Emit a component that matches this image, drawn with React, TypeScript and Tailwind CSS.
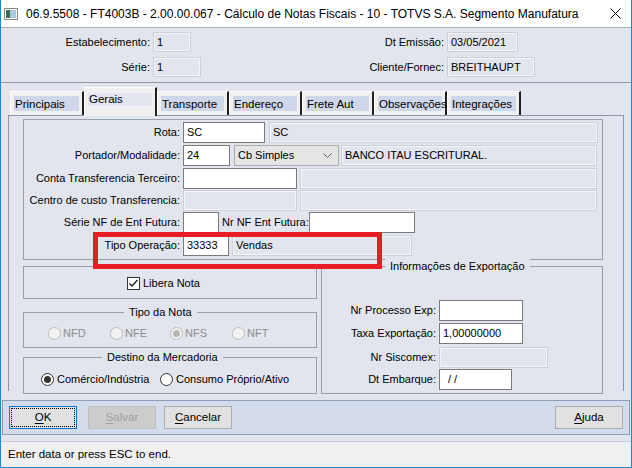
import React from "react";

const FONT = "font-['Liberation_Sans',Arial,sans-serif]";

function White({ w, value = "", className = "" }: { w: number; value?: string; className?: string }) {
  return (
    <div
      className={`h-[21px] bg-white border border-[#7a7a7a] px-[3px] flex items-center whitespace-nowrap overflow-hidden ${className}`}
      style={{ width: w }}
    >
      {value}
    </div>
  );
}

function Disabled({ w, value = "", className = "" }: { w: number; value?: string; className?: string }) {
  return (
    <div
      className={`h-[21px] bg-[#e2e5ed] border border-[#cdd0d6] shadow-[inset_0_0_0_1px_#f3f4f7] px-[3px] flex items-center whitespace-nowrap overflow-hidden ${className}`}
      style={{ width: w }}
    >
      {value}
    </div>
  );
}

function Tab({ label, w, selected = false }: { label: string; w: number; selected?: boolean }) {
  if (selected) {
    return (
      <div
        className="relative z-10 h-[29px] -mb-[1px] bg-[#f0f0f0] border-l border-t border-white border-r-2 border-r-[#202020] px-[3px] pt-[5px]"
        style={{ width: w }}
      >
        <div className="h-[13px] bg-[#e3e6ee] leading-[13px] pl-[1px] text-[11.5px] whitespace-nowrap">{label}</div>
      </div>
    );
  }
  return (
    <div
      className="h-[24px] bg-[#f0f0f0] border-l border-t border-white border-r-2 border-r-[#202020] px-[3px] pt-[4px]"
      style={{ width: w }}
    >
      <div className="h-[15px] bg-[#cfd7ea] leading-[17px] pl-[1px] text-[11.5px] whitespace-nowrap">{label}</div>
    </div>
  );
}

function Radio({ checked = false, disabled = false }: { checked?: boolean; disabled?: boolean }) {
  return (
    <div
      className={`w-[13px] h-[13px] rounded-full border flex items-center justify-center ${
        disabled ? "border-[#bcbcbc] bg-[#f2f2f2]" : "border-[#333333] bg-white"
      }`}
    >
      {checked && (
        <div className={`w-[7px] h-[7px] rounded-full ${disabled ? "bg-[#b5b5b5]" : "bg-[#333333]"}`} />
      )}
    </div>
  );
}

function Btn({ label, u, w, focused = false, disabled = false }: { label: string; u: number; w: number; focused?: boolean; disabled?: boolean }) {
  const chars = label.split("");
  const text = (
    <span>
      {chars.map((c, i) => (
        <span key={i} className={i === u ? "underline underline-offset-2" : ""}>
          {c}
        </span>
      ))}
    </span>
  );
  if (focused) {
    return (
      <div className="h-[23px] border border-[#0078d7] bg-[#e1e1e1] p-[1px]" style={{ width: w }}>
        <div className="h-full border border-dotted border-black flex items-center justify-center">{text}</div>
      </div>
    );
  }
  return (
    <div
      className={`h-[23px] border flex items-center justify-center ${
        disabled ? "border-[#bfbfbf] bg-[#cccccc] text-[#a0a0a0]" : "border-[#adadad] bg-[#e1e1e1]"
      }`}
      style={{ width: w }}
    >
      {text}
    </div>
  );
}

export default function App() {
  return (
    <div
      className={`${FONT} text-[11px] text-black w-[632px] h-[468px] bg-[#e2e5ed] border-x border-b border-[#1e88d8] flex flex-col overflow-hidden whitespace-nowrap`}
    >
      {/* Title bar */}
      <div className="h-[27px] bg-white flex items-center shrink-0">
        <svg width="14" height="12" viewBox="0 0 14 12" className="ml-[3px]">
          <rect x="0.5" y="0.5" width="13" height="11" fill="#ffffff" stroke="#8a8a8a" />
          <rect x="2" y="2" width="4" height="8" fill="#3c6e5a" />
          <rect x="6" y="2" width="6" height="8" fill="#a9c9e2" />
        </svg>
        <div className="ml-[8px] text-[12px] whitespace-nowrap">
          06.9.5508 - FT4003B - 2.00.00.067 - Cálculo de Notas Fiscais - 10 - TOTVS S.A. Segmento Manufatura
        </div>
        <div className="flex-1" />
        <svg width="11" height="11" viewBox="0 0 11 11" className="mr-[10px]">
          <path d="M0.5 0.5 L10.5 10.5 M10.5 0.5 L0.5 10.5" stroke="#000" strokeWidth="1" />
        </svg>
      </div>

      {/* Header */}
      <div className="h-[56px] shrink-0 border-t border-[#a9aeb8] border-b border-b-[#8e98aa] pt-[4px] flex flex-col gap-[5px]">
        <div className="flex h-[20px] items-center">
          <div className="w-[300px] flex items-center">
            <div className="w-[149px] text-right">Estabelecimento:</div>
            <Disabled w={38} value="1" className="ml-[3px] !h-[20px]" />
          </div>
          <div className="w-[143px] text-right">Dt Emissão:</div>
          <Disabled w={71} value="03/05/2021" className="ml-[3px] !h-[20px]" />
        </div>
        <div className="flex h-[20px] items-center">
          <div className="w-[300px] flex items-center">
            <div className="w-[149px] text-right">Série:</div>
            <Disabled w={48} value="1" className="ml-[3px] !h-[20px]" />
          </div>
          <div className="w-[143px] text-right">Cliente/Fornec:</div>
          <Disabled w={88} value="BREITHAUPT" className="ml-[3px] !h-[20px]" />
        </div>
      </div>

      {/* Tabs area */}
      <div className="pl-[7px] pr-[7px] pt-[4px] shrink-0">
        <div className="h-[28px] flex items-end pl-[2px]">
          <Tab label="Principais" w={74} />
          <Tab label="Gerais" w={73} selected />
          <Tab label="Transporte" w={72} />
          <Tab label="Endereço" w={73} />
          <Tab label="Frete Aut" w={72} />
          <Tab label="Observações" w={73} />
          <Tab label="Integrações" w={74} />
        </div>
        <div className="h-[276px] border border-b-0 border-[#8d97a9] relative">
          {/* Group 1 */}
          <div className="ml-[14px] mt-[3px] w-[580px] h-[141px] border border-[#9aa0ab] pt-[2px] relative">
            <div className="flex items-center">
              <div className="w-[156px] text-right">Rota:</div>
              <White w={82} value="SC" className="ml-[3px]" />
              <Disabled w={329} value="SC" className="ml-[4px]" />
            </div>
            <div className="flex items-center mt-[2px]">
              <div className="w-[156px] text-right">Portador/Modalidade:</div>
              <White w={47} value="24" className="ml-[3px]" />
              <div className="ml-[4px] w-[105px] h-[21px] bg-[#e5e5e5] border border-[#adadad] flex items-center pl-[3px]">
                <span className="flex-1">Cb Simples</span>
                <svg width="9" height="6" viewBox="0 0 9 6" className="mr-[6px]">
                  <path d="M0.5 0.5 L4.5 4.5 L8.5 0.5" fill="none" stroke="#606060" />
                </svg>
              </div>
              <Disabled w={256} value="BANCO ITAU ESCRITURAL." className="ml-[2px]" />
            </div>
            <div className="flex items-center mt-[2px]">
              <div className="w-[156px] text-right">Conta Transferencia Terceiro:</div>
              <White w={114} className="ml-[3px]" />
              <Disabled w={297} className="ml-[3px]" />
            </div>
            <div className="flex items-center mt-[1px]">
              <div className="w-[156px] text-right">Centro de custo Transferencia:</div>
              <Disabled w={114} className="ml-[3px]" />
              <Disabled w={297} className="ml-[3px]" />
            </div>
            <div className="flex items-center mt-[1px]">
              <div className="w-[156px] text-right">Série NF de Ent Futura:</div>
              <White w={36} className="ml-[3px]" />
              <div className="ml-[3px] w-[86px]">Nr NF Ent Futura:</div>
              <White w={106} className="ml-[1px]" />
            </div>
            <div className="flex items-center mt-[2px]">
              <div className="w-[156px] text-right">Tipo Operação:</div>
              <White w={46} value="33333" className="ml-[3px]" />
              <Disabled w={180} value="Vendas" className="ml-[3px]" />
            </div>
          </div>

          {/* Red annotation rectangle */}
          <div className="absolute left-[84px] top-[116px] w-[289px] h-[37px] border-[5px] border-[#e81c25] z-20" />

          {/* Bottom row */}
          <div className="flex mt-[6px] ml-[14px]">
            <div className="w-[294px] flex flex-col">
              <div className="h-[33px] border border-[#9aa0ab] flex items-center pl-[103px] pt-[2px]">
                <div className="w-[13px] h-[13px] border border-[#333333] bg-white flex items-center justify-center">
                  <svg width="11" height="11" viewBox="0 0 11 11">
                    <path d="M1.5 5.5 L4 8 L9.5 2" fill="none" stroke="#222" strokeWidth="1.4" />
                  </svg>
                </div>
                <span className="ml-[3px]">Libera Nota</span>
              </div>
              <div className="mt-[13px] h-[36px] border border-[#9aa0ab] relative">
                <div className="absolute left-[100px] top-[-9px] px-[5px] bg-[#e2e5ed] leading-[16px]">Tipo da Nota</div>
                <div className="flex items-center pl-[24px] pt-[12px] text-[#8d8d8d]">
                  <div className="w-[62px] flex items-center">
                    <Radio disabled />
                    <span className="ml-[2px]">NFD</span>
                  </div>
                  <div className="w-[60px] flex items-center">
                    <Radio disabled />
                    <span className="ml-[2px]">NFE</span>
                  </div>
                  <div className="w-[62px] flex items-center">
                    <Radio disabled checked />
                    <span className="ml-[2px]">NFS</span>
                  </div>
                  <div className="flex items-center">
                    <Radio disabled />
                    <span className="ml-[2px]">NFT</span>
                  </div>
                </div>
              </div>
              <div className="mt-[9px] h-[37px] border border-[#9aa0ab] relative">
                <div className="absolute left-[78px] top-[-9px] px-[5px] bg-[#e2e5ed] leading-[16px]">Destino da Mercadoria</div>
                <div className="flex items-center pl-[17px] pt-[13px]">
                  <div className="w-[119px] flex items-center">
                    <Radio checked />
                    <span className="ml-[3px]">Comércio/Indústria</span>
                  </div>
                  <div className="flex items-center">
                    <Radio />
                    <span className="ml-[3px]">Consumo Próprio/Ativo</span>
                  </div>
                </div>
              </div>
            </div>

            <div className="ml-[4px] w-[282px] h-[128px] border border-[#9aa0ab] relative pt-[33px]">
              <div className="absolute left-[63px] top-[-9px] px-[5px] bg-[#e2e5ed] leading-[16px]">Informações de Exportação</div>
              <div className="flex items-center">
                <div className="w-[114px] text-right">Nr Processo Exp:</div>
                <White w={84} className="ml-[3px]" />
              </div>
              <div className="flex items-center mt-[2px]">
                <div className="w-[114px] text-right">Taxa Exportação:</div>
                <White w={84} value="1,00000000" className="ml-[3px]" />
              </div>
              <div className="flex items-center mt-[3px]">
                <div className="w-[114px] text-right">Nr Siscomex:</div>
                <Disabled w={109} className="ml-[3px]" />
              </div>
              <div className="flex items-center mt-[1px]">
                <div className="w-[114px] text-right">Dt Embarque:</div>
                <White w={73} value=" / /" className="ml-[3px] !pl-[8px]" />
              </div>
            </div>
          </div>
        </div>
      </div>

      {/* Button bar */}
      <div className="mt-[9px] mx-[1px] h-[35px] shrink-0 bg-[#d3dbed] border border-[#8e9db8] flex items-center px-[6px] text-[11.5px]">
        <Btn label="OK" u={0} w={68} focused />
        <div className="ml-[11px]">
          <Btn label="Salvar" u={0} w={68} disabled />
        </div>
        <div className="ml-[8px]">
          <Btn label="Cancelar" u={0} w={68} />
        </div>
        <div className="flex-1" />
        <Btn label="Ajuda" u={0} w={68} />
      </div>

      {/* Status bar */}
      <div className="mt-[6px] flex-1 border-t border-[#c8cbd2] bg-[#f0f0f0] flex items-center pl-[7px] text-[11.5px]">
        Enter data or press ESC to end.
      </div>
    </div>
  );
}
